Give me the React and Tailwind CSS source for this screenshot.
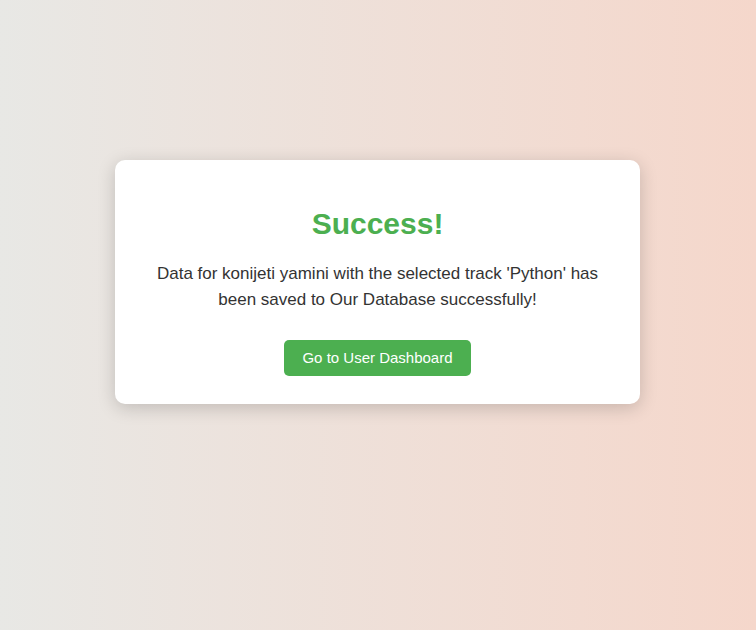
import React from 'react';

function App() {
  return (
    <div
      className="min-h-screen w-full bg-gradient-to-r from-[#e8e8e5] to-[#f5d7cb] pt-[160px]"
      style={{ fontFamily: '"Liberation Sans", Arial, sans-serif' }}
    >
      <div className="ml-[115px] w-[525px] rounded-[10px] bg-white px-10 pt-[46px] pb-[28px] text-center shadow-[0_4px_18px_rgba(0,0,0,0.18)]">
        <h1 className="text-[30px] font-bold leading-[35px] text-[#4caf50]">Success!</h1>
        <p className="mt-[20px] text-[17px] leading-[26px] text-[#333333]">
          Data for konijeti yamini with the selected track 'Python' has been saved to Our Database successfully!
        </p>
        <button className="mt-[27px] h-[36px] rounded-[5px] bg-[#4caf50] px-[18px] text-[15px] text-white">
          Go to User Dashboard
        </button>
      </div>
    </div>
  );
}

export default App;
